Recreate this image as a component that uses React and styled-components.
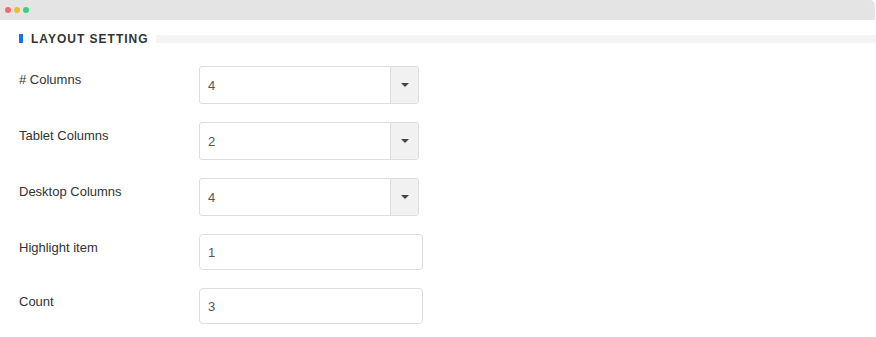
import styled, { createGlobalStyle } from "styled-components";

const GlobalStyle = createGlobalStyle`
  body {
    margin: 0;
    background: #ffffff;
    font-family: "Liberation Sans", Arial, sans-serif;
  }
`;

const Window = styled.div`
  width: 876px;
  height: 337px;
  background: #ffffff;
  overflow: hidden;
`;

const TitleBar = styled.div`
  height: 20px;
  margin-right: 1px;
  background: #e4e4e4;
  border-top-right-radius: 5px;
  display: flex;
  align-items: center;
  gap: 3px;
  padding-left: 5px;
`;

const Dot = styled.span`
  width: 6px;
  height: 6px;
  border-radius: 50%;
  background: ${(p) => p.color};
`;

const Content = styled.div`
  padding: 14px 0 0 19px;
`;

const SectionHeader = styled.div`
  display: flex;
  align-items: center;
  height: 9px;
  margin-bottom: 23px;
`;

const Marker = styled.span`
  width: 4px;
  height: 9px;
  background: #1a6ef5;
`;

const Title = styled.h3`
  margin: 0 0 0 8px;
  font-size: 12px;
  font-weight: 700;
  letter-spacing: 1px;
  line-height: 12px;
  color: #333333;
  text-transform: uppercase;
`;

const Rule = styled.span`
  flex: 1;
  height: 8px;
  margin-left: 7px;
  background: #f4f4f4;
`;

const Fields = styled.div`
  display: flex;
  flex-direction: column;
  gap: 18px;
`;

const Row = styled.div`
  display: grid;
  grid-template-columns: 180px auto;
  align-items: start;
`;

const Label = styled.label`
  padding-top: 4px;
  font-size: 13px;
  line-height: 20px;
  color: #333333;
`;

const Select = styled.div`
  box-sizing: border-box;
  width: 220px;
  height: 38px;
  border: 1px solid #dddddd;
  border-radius: 3px;
  display: flex;
  align-items: stretch;
  background: #ffffff;
`;

const Value = styled.span`
  flex: 1;
  display: flex;
  align-items: center;
  padding-left: 8px;
  font-size: 13px;
  color: #555555;
`;

const Caret = styled.span`
  width: 27px;
  border-left: 1px solid #dddddd;
  background: #f1f1f1;
  display: flex;
  align-items: center;
  justify-content: center;
  border-radius: 0 2px 2px 0;

  &::after {
    content: "";
    border-left: 4px solid transparent;
    border-right: 4px solid transparent;
    border-top: 4px solid #444444;
  }
`;

const Input = styled.input`
  box-sizing: border-box;
  width: 224px;
  height: 36px;
  padding: 0 8px;
  border: 1px solid #dddddd;
  border-radius: 4px;
  font-family: "Liberation Sans", Arial, sans-serif;
  font-size: 13px;
  color: #555555;
  outline: none;
`;

const selects = [
  { label: "# Columns", value: "4" },
  { label: "Tablet Columns", value: "2" },
  { label: "Desktop Columns", value: "4" },
];

const inputs = [
  { label: "Highlight item", value: "1" },
  { label: "Count", value: "3" },
];

export default function App() {
  return (
    <>
      <GlobalStyle />
      <Window>
        <TitleBar>
          <Dot color="#ee6b6b" />
          <Dot color="#e6bd3d" />
          <Dot color="#3fcf7c" />
        </TitleBar>
        <Content>
          <SectionHeader>
            <Marker />
            <Title>Layout Setting</Title>
            <Rule />
          </SectionHeader>
          <Fields>
            {selects.map((s) => (
              <Row key={s.label}>
                <Label>{s.label}</Label>
                <Select>
                  <Value>{s.value}</Value>
                  <Caret />
                </Select>
              </Row>
            ))}
            {inputs.map((i) => (
              <Row key={i.label}>
                <Label>{i.label}</Label>
                <Input type="text" defaultValue={i.value} />
              </Row>
            ))}
          </Fields>
        </Content>
      </Window>
    </>
  );
}
